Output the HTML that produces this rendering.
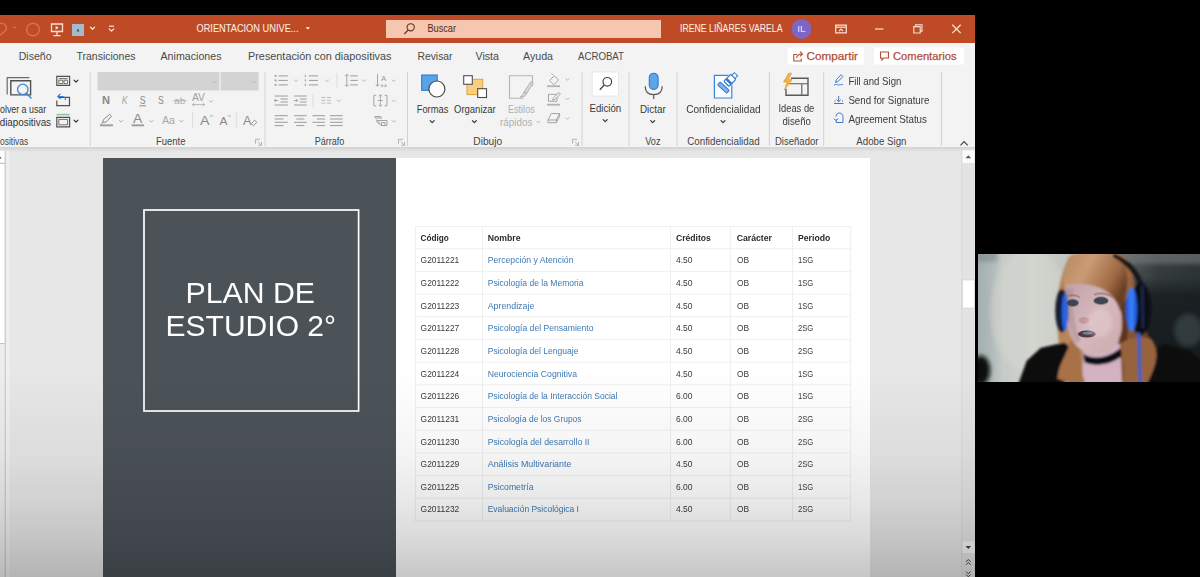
<!DOCTYPE html>
<html lang="es"><head><meta charset="utf-8"><title>ORIENTACION UNIVE... - PowerPoint</title>
<style>
html,body{margin:0;padding:0;background:#000;}
body{width:1200px;height:577px;overflow:hidden;position:relative;font-family:"Liberation Sans", sans-serif;}
#app{position:absolute;left:0;top:0;width:1200px;height:577px;filter:blur(0.45px);}
svg text{font-family:"Liberation Sans", sans-serif;}
</style></head><body>
<div id="app">
<svg width="1200" height="577" viewBox="0 0 1200 577" style="overflow:visible;display:block">
<defs>
<linearGradient id="btm" x1="0" y1="0" x2="0" y2="1"><stop offset="0" stop-color="#000" stop-opacity="0"/><stop offset="0.39" stop-color="#000" stop-opacity="0.04"/><stop offset="0.63" stop-color="#000" stop-opacity="0.09"/><stop offset="0.82" stop-color="#000" stop-opacity="0.15"/><stop offset="1" stop-color="#000" stop-opacity="0.22"/></linearGradient>
<linearGradient id="rshadow" x1="0" y1="0" x2="0" y2="1"><stop offset="0" stop-color="#d2d2d2"/><stop offset="1" stop-color="#e7e7e7"/></linearGradient>
<filter id="b1"><feGaussianBlur stdDeviation="1"/></filter>
<filter id="b2"><feGaussianBlur stdDeviation="2.2"/></filter>
<filter id="b4"><feGaussianBlur stdDeviation="4"/></filter>
<filter id="b8"><feGaussianBlur stdDeviation="8"/></filter>
<clipPath id="camclip"><rect x="978" y="254" width="240" height="128"/></clipPath>
</defs>
<g id="backgrounds">
<rect x="-10" y="-10" width="1220" height="600" fill="#000" />
<rect x="-10" y="15" width="985" height="28" fill="#BE4B26" />
<rect x="-10" y="43" width="985" height="107" fill="#F3F3F3" />
<rect x="-10" y="150" width="985" height="440" fill="#E7E7E7" />
<rect x="-10" y="147" width="985" height="5" fill="url(#rshadow)" />
</g>
<g id="titlebar">
<path d="M0 23.5 C5 22.5 8.5 27 5 31 L0 35.5" stroke="#D4754F" fill="none" stroke-width="1.4" />
<line x1="13" y1="27.5" x2="16.5" y2="27.5" stroke="#D4754F" stroke-width="1.2" />
<circle cx="33" cy="29.5" r="6.3" fill="none" stroke="#D27450" stroke-width="1.4"/>
<path d="M51.5 24h11v7.5h-11z M57 31.5v4 M53.5 35.7h7" stroke="#F8E3D3" fill="none" stroke-width="1.3" />
<path d="M55.6 25.8l3.2 2-3.2 2z" stroke="none" fill="#F8E3D3" stroke-width="1" />
<rect x="72" y="24" width="12" height="12" fill="#A3BBCB" />
<path d="M76.5 31.5l1.5-3 1.5 3z" stroke="none" fill="#3d5566" stroke-width="1" />
<path d="M90.5 27.3L92.5 29.3L94.5 27.3" stroke="#F8E3D3" fill="none" stroke-width="1.3" stroke-linecap="round" stroke-linejoin="round"/>
<line x1="109" y1="26.2" x2="114" y2="26.2" stroke="#F8E3D3" stroke-width="1.2" />
<path d="M109.2 28.85L111.5 31.15L113.8 28.85" stroke="#F8E3D3" fill="none" stroke-width="1.3" stroke-linecap="round" stroke-linejoin="round"/>
<text x="196.5" y="32.2" font-size="11.2" fill="#FFF4EA" font-weight="normal" font-style="normal" textLength="102.0" lengthAdjust="spacingAndGlyphs">ORIENTACION UNIVE...</text>
<path d="M305.6 27.2h4.4l-2.2 2.4z" stroke="none" fill="#FFF4EA" stroke-width="1" />
<rect x="386" y="20" width="275" height="18" fill="#F6C7AE" />
<circle cx="410.7" cy="27.3" r="3.6" fill="none" stroke="#5a3a2c" stroke-width="1.1"/>
<line x1="408.2" y1="30" x2="404.3" y2="34" stroke="#5a3a2c" stroke-width="1.2" />
<text x="427.5" y="32.3" font-size="10.5" fill="#4a2a1c" font-weight="normal" font-style="normal" textLength="28.5" lengthAdjust="spacingAndGlyphs">Buscar</text>
<text x="680.0" y="32.3" font-size="10.5" fill="#FFF4EA" font-weight="normal" font-style="normal" textLength="102.5" lengthAdjust="spacingAndGlyphs">IRENE LIÑARES VARELA</text>
<circle cx="801.5" cy="29" r="10" fill="#7F66C6"/>
<text x="797.3" y="32.3" font-size="8.8" fill="#E9E1FA" font-weight="normal" font-style="normal" textLength="8.4" lengthAdjust="spacingAndGlyphs">IL</text>
<path d="M835.7 25.2h10.6v7.6h-10.6z" stroke="#F8E3D3" fill="none" stroke-width="1.2" />
<line x1="835.7" y1="27.2" x2="846.3" y2="27.2" stroke="#F8E3D3" stroke-width="1.2" />
<path d="M839 31l2-2 2 2" stroke="#F8E3D3" fill="none" stroke-width="1.1" />
<line x1="875" y1="29" x2="883.5" y2="29" stroke="#F8E3D3" stroke-width="1.2" />
<path d="M913.8 26.6h6.4v6.4h-6.4z M915.6 26.4v-1.7h6.4v6.4h-1.6" stroke="#F8E3D3" fill="none" stroke-width="1.1" />
<path d="M952.3 24.7l8.4 8.4M960.7 24.7l-8.4 8.4" stroke="#F8E3D3" fill="none" stroke-width="1.3" />
</g>
<g id="tabs">
<text x="18.7" y="59.8" font-size="10.8" fill="#4a4a4a" font-weight="normal" font-style="normal" textLength="32.8" lengthAdjust="spacingAndGlyphs">Diseño</text>
<text x="76.5" y="59.8" font-size="10.8" fill="#4a4a4a" font-weight="normal" font-style="normal" textLength="59.0" lengthAdjust="spacingAndGlyphs">Transiciones</text>
<text x="160.5" y="59.8" font-size="10.8" fill="#4a4a4a" font-weight="normal" font-style="normal" textLength="61.0" lengthAdjust="spacingAndGlyphs">Animaciones</text>
<text x="248.0" y="59.8" font-size="10.8" fill="#4a4a4a" font-weight="normal" font-style="normal" textLength="143.5" lengthAdjust="spacingAndGlyphs">Presentación con diapositivas</text>
<text x="417.5" y="59.8" font-size="10.8" fill="#4a4a4a" font-weight="normal" font-style="normal" textLength="35.0" lengthAdjust="spacingAndGlyphs">Revisar</text>
<text x="475.5" y="59.8" font-size="10.8" fill="#4a4a4a" font-weight="normal" font-style="normal" textLength="23.5" lengthAdjust="spacingAndGlyphs">Vista</text>
<text x="523.0" y="59.8" font-size="10.8" fill="#4a4a4a" font-weight="normal" font-style="normal" textLength="30.0" lengthAdjust="spacingAndGlyphs">Ayuda</text>
<text x="578.0" y="59.8" font-size="10.8" fill="#4a4a4a" font-weight="normal" font-style="normal" textLength="46.0" lengthAdjust="spacingAndGlyphs">ACROBAT</text>
<rect x="787.5" y="47.5" width="76.5" height="17" fill="#FFFFFF" />
<rect x="874" y="47.5" width="90" height="17" fill="#FFFFFF" />
<text x="806.5" y="59.8" font-size="11" fill="#B24D38" font-weight="normal" font-style="normal" textLength="51.5" lengthAdjust="spacingAndGlyphs" stroke="#B24D38" stroke-width="0.25">Compartir</text>
<text x="893.0" y="59.8" font-size="11" fill="#B24D38" font-weight="normal" font-style="normal" textLength="63.5" lengthAdjust="spacingAndGlyphs" stroke="#B24D38" stroke-width="0.25">Comentarios</text>
<path d="M797 54.5h-3.2v6.5h7.5v-2.5" stroke="#B24D38" fill="none" stroke-width="1.1" />
<path d="M796.5 58c0.5-2.8 2.5-4 5.5-4 M800 51.7l2.5 2.3-2.5 2.3" stroke="#B24D38" fill="none" stroke-width="1.1" />
<path d="M880.5 52h8v6h-4.6l-2 2.2v-2.2h-1.4z" stroke="#B24D38" fill="none" stroke-width="1.1" />
</g>
<g id="ribbon-groups">
<line x1="90.2" y1="72" x2="90.2" y2="146" stroke="#D2D2D2" stroke-width="1" />
<line x1="265" y1="72" x2="265" y2="146" stroke="#D2D2D2" stroke-width="1" />
<line x1="407.5" y1="72" x2="407.5" y2="146" stroke="#D2D2D2" stroke-width="1" />
<line x1="582" y1="72" x2="582" y2="146" stroke="#D2D2D2" stroke-width="1" />
<line x1="629" y1="72" x2="629" y2="146" stroke="#D2D2D2" stroke-width="1" />
<line x1="677" y1="72" x2="677" y2="146" stroke="#D2D2D2" stroke-width="1" />
<line x1="769.4" y1="72" x2="769.4" y2="146" stroke="#D2D2D2" stroke-width="1" />
<line x1="823.7" y1="72" x2="823.7" y2="146" stroke="#D2D2D2" stroke-width="1" />
<line x1="941.4" y1="72" x2="941.4" y2="146" stroke="#D2D2D2" stroke-width="1" />
<text x="0.0" y="144.6" font-size="10" fill="#444" font-weight="normal" font-style="normal" textLength="28.2" lengthAdjust="spacingAndGlyphs">ositivas</text>
<text x="156.0" y="144.6" font-size="10" fill="#444" font-weight="normal" font-style="normal" textLength="29.5" lengthAdjust="spacingAndGlyphs">Fuente</text>
<text x="314.7" y="144.6" font-size="10" fill="#444" font-weight="normal" font-style="normal" textLength="29.7" lengthAdjust="spacingAndGlyphs">Párrafo</text>
<text x="473.3" y="144.6" font-size="10" fill="#444" font-weight="normal" font-style="normal" textLength="28.9" lengthAdjust="spacingAndGlyphs">Dibujo</text>
<text x="645.2" y="144.6" font-size="10" fill="#444" font-weight="normal" font-style="normal" textLength="15.3" lengthAdjust="spacingAndGlyphs">Voz</text>
<text x="687.2" y="144.6" font-size="10" fill="#444" font-weight="normal" font-style="normal" textLength="72.4" lengthAdjust="spacingAndGlyphs">Confidencialidad</text>
<text x="775.0" y="144.6" font-size="10" fill="#444" font-weight="normal" font-style="normal" textLength="43.4" lengthAdjust="spacingAndGlyphs">Diseñador</text>
<text x="856.3" y="144.6" font-size="10" fill="#444" font-weight="normal" font-style="normal" textLength="50.2" lengthAdjust="spacingAndGlyphs">Adobe Sign</text>
<path d="M255.5 143.8v-4.5h4.5 M257.7 141.5l3.6 3.6 M261.5 141.9v3.4h-3.4" stroke="#adadad" fill="none" stroke-width="0.9" />
<path d="M398.5 143.8v-4.5h4.5 M400.7 141.5l3.6 3.6 M404.5 141.9v3.4h-3.4" stroke="#adadad" fill="none" stroke-width="0.9" />
<path d="M572.5 143.8v-4.5h4.5 M574.7 141.5l3.6 3.6 M578.5 141.9v3.4h-3.4" stroke="#adadad" fill="none" stroke-width="0.9" />
<path d="M960.5 145.3l3.6-3.6 3.6 3.6" stroke="#444" fill="none" stroke-width="1.2" />
</g>
<g id="ribbon-diapositivas">
<path d="M7.2 94.6V77.7H29.3" stroke="#6a6a6a" fill="none" stroke-width="1.2" />
<path d="M10.8 80.7h19.8v14.2h-19.8z" stroke="#505050" fill="none" stroke-width="1.4" />
<circle cx="22.8" cy="89.4" r="5.2" fill="#F3F3F3" stroke="#3C86D6" stroke-width="1.3"/>
<line x1="26.5" y1="93.3" x2="31.4" y2="98.6" stroke="#3C86D6" stroke-width="1.4" />
<text x="0.0" y="113.0" font-size="10.6" fill="#333" font-weight="normal" font-style="normal" textLength="46.2" lengthAdjust="spacingAndGlyphs">olver a usar</text>
<text x="-0.3" y="125.6" font-size="10.6" fill="#333" font-weight="normal" font-style="normal" textLength="51.3" lengthAdjust="spacingAndGlyphs">diapositivas</text>
<path d="M56.8 76.3h12.8v9h-12.8z" stroke="#505050" fill="none" stroke-width="1.2" />
<path d="M58.8 78.6h8.8 M58.8 80.2h4v3.4h-4z M64 80.2h3.6v3.4h-3.6z" stroke="#505050" fill="none" stroke-width="0.8" />
<path d="M74 80.2L76 82.2L78 80.2" stroke="#333" fill="none" stroke-width="1.2" stroke-linecap="round" stroke-linejoin="round"/>
<path d="M58 97.3h11.5v8.3h-12.7v-5" stroke="#505050" fill="none" stroke-width="1.2" />
<path d="M60.5 93.8l-2.7 2.7 2.7 2.7 M57.8 96.5h4c2.5 0 3.8 1.5 3.8 3.5" stroke="#2F7FD0" fill="none" stroke-width="1.2" />
<rect x="56.5" y="113.8" width="13.2" height="1.6" fill="#8FC7A6" />
<path d="M56.8 117.3h12.8v9.5h-12.8z" stroke="#505050" fill="none" stroke-width="1.2" />
<path d="M58.8 119.4h8.8v5.4h-8.8z" stroke="#505050" fill="none" stroke-width="0.8" />
<path d="M74 120.2L76 122.2L78 120.2" stroke="#333" fill="none" stroke-width="1.2" stroke-linecap="round" stroke-linejoin="round"/>
</g>
<g id="ribbon-fuente">
<rect x="97.5" y="72" width="122" height="18.5" fill="#D3D3D3" />
<rect x="220.7" y="72" width="38" height="18.5" fill="#D3D3D3" />
<path d="M212.79999999999998 81.1L214.6 82.9L216.4 81.1" stroke="#b9b9b9" fill="none" stroke-width="1" stroke-linecap="round" stroke-linejoin="round"/>
<path d="M252.0 81.1L253.8 82.9L255.60000000000002 81.1" stroke="#b9b9b9" fill="none" stroke-width="1" stroke-linecap="round" stroke-linejoin="round"/>
<text x="102.0" y="103.9" font-size="11.5" fill="#888" font-weight="bold" font-style="normal" textLength="8.0" lengthAdjust="spacingAndGlyphs">N</text>
<text x="121.7" y="103.9" font-size="11.5" fill="#a8a8a8" font-weight="normal" font-style="italic" textLength="5.9" lengthAdjust="spacingAndGlyphs">K</text>
<text x="139.7" y="103.7" font-size="11.5" fill="#8a8a8a" font-weight="normal" font-style="normal" textLength="5.8" lengthAdjust="spacingAndGlyphs">S</text>
<line x1="139.3" y1="105.8" x2="146" y2="105.8" stroke="#8a8a8a" stroke-width="1" />
<text x="158.0" y="103.9" font-size="11.5" fill="#8a8a8a" font-weight="normal" font-style="normal" textLength="5.8" lengthAdjust="spacingAndGlyphs">S</text>
<text x="174.3" y="104.0" font-size="9" fill="#b0b0b0" font-weight="normal" font-style="normal" textLength="11.0" lengthAdjust="spacingAndGlyphs">ab</text>
<line x1="173" y1="100.7" x2="186.5" y2="100.7" stroke="#b0b0b0" stroke-width="0.9" />
<text x="192.0" y="101.0" font-size="10.3" fill="#a0a0a0" font-weight="normal" font-style="normal" textLength="13.0" lengthAdjust="spacingAndGlyphs">AV</text>
<path d="M192.5 104.6h12 M194.3 103.1l-1.8 1.5 1.8 1.5 M202.7 103.1l1.8 1.5-1.8 1.5" stroke="#a8a8a8" fill="none" stroke-width="0.8" />
<path d="M209.4 100.7L211 102.3L212.6 100.7" stroke="#b0b0b0" fill="none" stroke-width="1" stroke-linecap="round" stroke-linejoin="round"/>
<path d="M102.5 122.5l1.2-3.2 6-5 1.8 1.8-5.2 5.8z M102.3 122.7l-1 1.2" stroke="#8a8a8a" fill="none" stroke-width="1" />
<rect x="100" y="124.3" width="13" height="2" fill="#a0a0a0" />
<path d="M119.4 120.5L121 122.1L122.6 120.5" stroke="#b0b0b0" fill="none" stroke-width="1" stroke-linecap="round" stroke-linejoin="round"/>
<text x="133.0" y="122.6" font-size="12" fill="#8a8a8a" font-weight="normal" font-style="normal" textLength="9.3" lengthAdjust="spacingAndGlyphs">A</text>
<rect x="131.5" y="124.3" width="12.5" height="2" fill="#a0a0a0" />
<path d="M149.70000000000002 120.5L151.3 122.1L152.9 120.5" stroke="#b0b0b0" fill="none" stroke-width="1" stroke-linecap="round" stroke-linejoin="round"/>
<text x="162.0" y="124.3" font-size="10.5" fill="#a8a8a8" font-weight="normal" font-style="normal" textLength="13.0" lengthAdjust="spacingAndGlyphs">Aa</text>
<path d="M179.6 120.5L181.2 122.1L182.79999999999998 120.5" stroke="#b0b0b0" fill="none" stroke-width="1" stroke-linecap="round" stroke-linejoin="round"/>
<line x1="192.5" y1="112" x2="192.5" y2="128" stroke="#dcdcdc" stroke-width="1" />
<text x="200.0" y="125.0" font-size="13" fill="#8a8a8a" font-weight="normal" font-style="normal" textLength="9.5" lengthAdjust="spacingAndGlyphs">A</text>
<path d="M210.2 116.6l1.4-1.5 1.4 1.5" stroke="#8a8a8a" fill="none" stroke-width="0.8" />
<text x="219.5" y="125.0" font-size="11" fill="#8a8a8a" font-weight="normal" font-style="normal" textLength="8.0" lengthAdjust="spacingAndGlyphs">A</text>
<path d="M228 115.3l1.3 1.4 1.3-1.4" stroke="#8a8a8a" fill="none" stroke-width="0.8" />
<line x1="236.3" y1="112" x2="236.3" y2="128" stroke="#dcdcdc" stroke-width="1" />
<text x="243.0" y="125.0" font-size="12.5" fill="#8a8a8a" font-weight="normal" font-style="normal" textLength="8.5" lengthAdjust="spacingAndGlyphs">A</text>
<path d="M251.3 123.8l3.3-3.6 2.2 2-3.3 3.6z" stroke="#8a8a8a" fill="none" stroke-width="0.9" />
</g>
<g id="ribbon-parrafo">
<g transform="translate(0,-0.9)">
<rect x="274.7" y="75.89999999999999" width="1.8" height="1.8" fill="#9c9c9c" />
<line x1="278.5" y1="76.8" x2="287.8" y2="76.8" stroke="#9c9c9c" stroke-width="1" />
<rect x="274.7" y="80.39999999999999" width="1.8" height="1.8" fill="#9c9c9c" />
<line x1="278.5" y1="81.3" x2="287.8" y2="81.3" stroke="#9c9c9c" stroke-width="1" />
<rect x="274.7" y="84.89999999999999" width="1.8" height="1.8" fill="#9c9c9c" />
<line x1="278.5" y1="85.8" x2="287.8" y2="85.8" stroke="#9c9c9c" stroke-width="1" />
<path d="M294.4 80.8L296 82.39999999999999L297.6 80.8" stroke="#b8b8b8" fill="none" stroke-width="1" stroke-linecap="round" stroke-linejoin="round"/>
<line x1="305.3" y1="75.6" x2="305.3" y2="78.0" stroke="#9c9c9c" stroke-width="1" />
<line x1="308.8" y1="76.8" x2="318" y2="76.8" stroke="#9c9c9c" stroke-width="1" />
<line x1="305.3" y1="80.1" x2="305.3" y2="82.5" stroke="#9c9c9c" stroke-width="1" />
<line x1="308.8" y1="81.3" x2="318" y2="81.3" stroke="#9c9c9c" stroke-width="1" />
<line x1="305.3" y1="84.6" x2="305.3" y2="87.0" stroke="#9c9c9c" stroke-width="1" />
<line x1="308.8" y1="85.8" x2="318" y2="85.8" stroke="#9c9c9c" stroke-width="1" />
<path d="M325.4 80.8L327 82.39999999999999L328.6 80.8" stroke="#b8b8b8" fill="none" stroke-width="1" stroke-linecap="round" stroke-linejoin="round"/>
<line x1="337" y1="74" x2="337" y2="88.5" stroke="#dcdcdc" stroke-width="1" />
<path d="M346.8 75.3v12 M345 77l1.8-1.8 1.8 1.8 M345 85.6l1.8 1.8 1.8-1.8" stroke="#9c9c9c" fill="none" stroke-width="0.9" />
<line x1="350.3" y1="76.8" x2="357.7" y2="76.8" stroke="#9c9c9c" stroke-width="1" />
<line x1="350.3" y1="81.3" x2="357.7" y2="81.3" stroke="#9c9c9c" stroke-width="1" />
<line x1="350.3" y1="85.8" x2="357.7" y2="85.8" stroke="#9c9c9c" stroke-width="1" />
<path d="M362.4 80.8L364 82.39999999999999L365.6 80.8" stroke="#b8b8b8" fill="none" stroke-width="1" stroke-linecap="round" stroke-linejoin="round"/>
<path d="M377.5 75v12 M375.7 85.3l1.8 1.8 1.8-1.8" stroke="#9c9c9c" fill="none" stroke-width="0.9" />
<text x="381.0" y="81.5" font-size="7.5" fill="#9c9c9c" font-weight="normal" font-style="normal" textLength="5.3" lengthAdjust="spacingAndGlyphs">A</text>
<path d="M381 86.7h5.4 M382.5 85.3l-1.6 1.4 1.6 1.4 M384.9 85.3l1.6 1.4-1.6 1.4" stroke="#9c9c9c" fill="none" stroke-width="0.7" />
<path d="M392.09999999999997 80.8L393.7 82.39999999999999L395.3 80.8" stroke="#b8b8b8" fill="none" stroke-width="1" stroke-linecap="round" stroke-linejoin="round"/>
</g>
<line x1="274.7" y1="96" x2="287.8" y2="96" stroke="#9c9c9c" stroke-width="1" />
<line x1="274.7" y1="105" x2="287.8" y2="105" stroke="#9c9c9c" stroke-width="1" />
<line x1="280.5" y1="99" x2="287.8" y2="99" stroke="#9c9c9c" stroke-width="1" />
<line x1="280.5" y1="102" x2="287.8" y2="102" stroke="#9c9c9c" stroke-width="1" />
<path d="M278.2 100.5h-3.8 M276 98.8l-1.7 1.7 1.7 1.7" stroke="#9c9c9c" fill="none" stroke-width="0.9" />
<line x1="294" y1="96" x2="306.7" y2="96" stroke="#9c9c9c" stroke-width="1" />
<line x1="294" y1="105" x2="306.7" y2="105" stroke="#9c9c9c" stroke-width="1" />
<line x1="299.8" y1="99" x2="306.7" y2="99" stroke="#9c9c9c" stroke-width="1" />
<line x1="299.8" y1="102" x2="306.7" y2="102" stroke="#9c9c9c" stroke-width="1" />
<path d="M293.8 100.5h3.8 M296 98.8l1.7 1.7-1.7 1.7" stroke="#9c9c9c" fill="none" stroke-width="0.9" />
<line x1="313" y1="93.5" x2="313" y2="107.5" stroke="#dcdcdc" stroke-width="1" />
<line x1="321.5" y1="97.5" x2="325.5" y2="97.5" stroke="#bdbdbd" stroke-width="1" />
<line x1="321.5" y1="100.3" x2="325.5" y2="100.3" stroke="#bdbdbd" stroke-width="1" />
<line x1="321.5" y1="103.1" x2="325.5" y2="103.1" stroke="#bdbdbd" stroke-width="1" />
<line x1="327" y1="97.5" x2="331" y2="97.5" stroke="#bdbdbd" stroke-width="1" />
<line x1="327" y1="100.3" x2="331" y2="100.3" stroke="#bdbdbd" stroke-width="1" />
<line x1="327" y1="103.1" x2="331" y2="103.1" stroke="#bdbdbd" stroke-width="1" />
<path d="M337.09999999999997 100.2L338.7 101.8L340.3 100.2" stroke="#b8b8b8" fill="none" stroke-width="1" stroke-linecap="round" stroke-linejoin="round"/>
<path d="M376.2 95.3h-2.4v10.5h2.4 M384.6 95.3h2.4v10.5h-2.4" stroke="#9c9c9c" fill="none" stroke-width="0.9" />
<path d="M380.4 94.5v12 M378.8 96.3l1.6-1.6 1.6 1.6 M378.8 104.7l1.6 1.6 1.6-1.6 M377.8 100.5h5.2" stroke="#9c9c9c" fill="none" stroke-width="0.8" />
<path d="M392.09999999999997 100.2L393.7 101.8L395.3 100.2" stroke="#b8b8b8" fill="none" stroke-width="1" stroke-linecap="round" stroke-linejoin="round"/>
<line x1="274.7" y1="115.7" x2="287.8" y2="115.7" stroke="#9c9c9c" stroke-width="1" />
<line x1="294" y1="115.7" x2="306.7" y2="115.7" stroke="#9c9c9c" stroke-width="1" />
<line x1="312.4" y1="115.7" x2="325" y2="115.7" stroke="#9c9c9c" stroke-width="1" />
<line x1="330" y1="115.7" x2="342.7" y2="115.7" stroke="#9c9c9c" stroke-width="1" />
<line x1="274.7" y1="119" x2="283.5" y2="119" stroke="#9c9c9c" stroke-width="1" />
<line x1="296.3" y1="119" x2="304.4" y2="119" stroke="#9c9c9c" stroke-width="1" />
<line x1="316.8" y1="119" x2="325" y2="119" stroke="#9c9c9c" stroke-width="1" />
<line x1="330" y1="119" x2="342.7" y2="119" stroke="#9c9c9c" stroke-width="1" />
<line x1="274.7" y1="122.3" x2="287.8" y2="122.3" stroke="#9c9c9c" stroke-width="1" />
<line x1="294" y1="122.3" x2="306.7" y2="122.3" stroke="#9c9c9c" stroke-width="1" />
<line x1="312.4" y1="122.3" x2="325" y2="122.3" stroke="#9c9c9c" stroke-width="1" />
<line x1="330" y1="122.3" x2="342.7" y2="122.3" stroke="#9c9c9c" stroke-width="1" />
<line x1="274.7" y1="125.6" x2="283.5" y2="125.6" stroke="#9c9c9c" stroke-width="1" />
<line x1="296.3" y1="125.6" x2="304.4" y2="125.6" stroke="#9c9c9c" stroke-width="1" />
<line x1="316.8" y1="125.6" x2="325" y2="125.6" stroke="#9c9c9c" stroke-width="1" />
<line x1="330" y1="125.6" x2="342.7" y2="125.6" stroke="#9c9c9c" stroke-width="1" />
<path d="M375 116.5h5.5l1.5 1.5h-7z M377.5 120.5h9.5v5h-6z M381.5 122.5h3.5v3h-3.5z" stroke="#9c9c9c" fill="none" stroke-width="0.9" />
<path d="M376.5 119.5c0 2.5 1 4 3 4.5" stroke="#9c9c9c" fill="none" stroke-width="0.8" />
<path d="M392.09999999999997 120.5L393.7 122.1L395.3 120.5" stroke="#b8b8b8" fill="none" stroke-width="1" stroke-linecap="round" stroke-linejoin="round"/>
</g>
<g id="ribbon-dibujo">
<rect x="421.7" y="75" width="15.5" height="15.3" fill="#5AA2E8" stroke="#2F78CE" stroke-width="1.1"/>
<circle cx="436.9" cy="89" r="8" fill="#FDFDFD" stroke="#4a4a4a" stroke-width="1.2"/>
<text x="416.7" y="112.7" font-size="11" fill="#3a3a3a" font-weight="normal" font-style="normal" textLength="31.7" lengthAdjust="spacingAndGlyphs">Formas</text>
<path d="M430.2 120.6L432.2 122.6L434.2 120.6" stroke="#333" fill="none" stroke-width="1.2" stroke-linecap="round" stroke-linejoin="round"/>
<rect x="467" y="79.3" width="15.7" height="15.3" fill="#F8CF7E" stroke="#E2A336" stroke-width="1"/>
<rect x="463.7" y="75.7" width="8.6" height="8.6" fill="#FFFFFF" stroke="#5a4a5a" stroke-width="1.1"/>
<rect x="477.7" y="88.7" width="8.8" height="8.8" fill="#FFFFFF" stroke="#4a4a4a" stroke-width="1.1"/>
<text x="454.0" y="112.7" font-size="11" fill="#3a3a3a" font-weight="normal" font-style="normal" textLength="41.7" lengthAdjust="spacingAndGlyphs">Organizar</text>
<path d="M472.4 120.6L474.4 122.6L476.4 120.6" stroke="#333" fill="none" stroke-width="1.2" stroke-linecap="round" stroke-linejoin="round"/>
<path d="M532.5 86v-10.3h-23v22.5h14" stroke="#b4b4b4" fill="none" stroke-width="1.1" />
<path d="M531 81.5l2.2 1.4-6.5 10.5-2.5-1.6z M524 92l2.6 1.7c-1 2.3-3.5 3.6-6.6 3.3 2.5-1 3-2.8 4-5z" stroke="#ababab" fill="#d9d9d9" stroke-width="0.9" />
<text x="507.9" y="112.7" font-size="11" fill="#b0b0b0" font-weight="normal" font-style="normal" textLength="26.9" lengthAdjust="spacingAndGlyphs">Estilos</text>
<text x="500.0" y="126.0" font-size="11" fill="#b0b0b0" font-weight="normal" font-style="normal" textLength="32.5" lengthAdjust="spacingAndGlyphs">rápidos</text>
<path d="M536.6999999999999 121.2L538.3 122.8L539.9 121.2" stroke="#b8b8b8" fill="none" stroke-width="1" stroke-linecap="round" stroke-linejoin="round"/>
<path d="M549.5 80.5l4.8-4.8 4.3 4.3-4.8 4.8z M553 75l-1.5-1.5" stroke="#9c9c9c" fill="none" stroke-width="0.9" />
<rect x="547" y="85.3" width="13" height="1.8" fill="#b3b3b3" />
<path d="M565.8 78.7L567.4 80.3L569.0 78.7" stroke="#b8b8b8" fill="none" stroke-width="1" stroke-linecap="round" stroke-linejoin="round"/>
<path d="M548.5 94.3h8.5v7h-8.5z" stroke="#9c9c9c" fill="none" stroke-width="0.9" />
<path d="M552.5 100.3l1-2.6 5.3-5.3 1.6 1.6-5.3 5.3z" stroke="#9c9c9c" fill="#F3F3F3" stroke-width="0.9" />
<rect x="547" y="103.8" width="13" height="1.8" fill="#b3b3b3" />
<path d="M565.8 98.2L567.4 99.8L569.0 98.2" stroke="#b8b8b8" fill="none" stroke-width="1" stroke-linecap="round" stroke-linejoin="round"/>
<path d="M548 120l3.3-6.5h8.3l-3.3 6.5z M548 120v2.7h8.3l3.3-6.5v-2.7 M556.3 120v2.7" stroke="#9c9c9c" fill="none" stroke-width="0.9" />
<path d="M565.8 117.7L567.4 119.3L569.0 117.7" stroke="#b8b8b8" fill="none" stroke-width="1" stroke-linecap="round" stroke-linejoin="round"/>
</g>
<g id="ribbon-edicion">
<rect x="592.2" y="72" width="26.3" height="24" fill="#FFFFFF" stroke="#E3E3E3" stroke-width="0.8"/>
<circle cx="607.3" cy="81.8" r="4.3" fill="none" stroke="#444" stroke-width="1.2"/>
<line x1="604.3" y1="85" x2="599.8" y2="89.8" stroke="#444" stroke-width="1.3" />
<text x="589.5" y="111.5" font-size="11" fill="#3a3a3a" font-weight="normal" font-style="normal" textLength="31.7" lengthAdjust="spacingAndGlyphs">Edición</text>
<path d="M603.2 119.6L605.2 121.6L607.2 119.6" stroke="#333" fill="none" stroke-width="1.2" stroke-linecap="round" stroke-linejoin="round"/>
</g>
<g id="ribbon-voz">
<rect x="649.3" y="73.2" width="8.8" height="16.3" rx="4.4" fill="#5CA6E6" stroke="#2F78CE" stroke-width="1.1"/>
<path d="M645.2 86.3c0 5.6 3.5 8.4 8.5 8.4s8.5-2.8 8.5-8.4 M653.7 94.8v4.3" stroke="#555" fill="none" stroke-width="1.2" />
<text x="640.0" y="113.0" font-size="11" fill="#3a3a3a" font-weight="normal" font-style="normal" textLength="25.7" lengthAdjust="spacingAndGlyphs">Dictar</text>
<path d="M650.7 120.6L652.7 122.6L654.7 120.6" stroke="#333" fill="none" stroke-width="1.2" stroke-linecap="round" stroke-linejoin="round"/>
</g>
<g id="ribbon-confidencialidad">
<path d="M714.4 75.4h17.4v22.6h-17.4z" stroke="#3C86D6" fill="#FAFCFF" stroke-width="1.2" />
<rect x="-6.3" y="-2" width="12.6" height="4" rx="1.2" transform="translate(723.4 87.6) rotate(42)" fill="#7DB5EC" stroke="#2F78CE" stroke-width="1"/>
<g transform="translate(730.6 79.6) rotate(-45)"><rect x="-7" y="-4.6" width="15.5" height="9.2" rx="1.5" fill="#F3F3F3"/><rect x="-6" y="-3.6" width="10" height="7.2" rx="1.2" fill="#FFFFFF" stroke="#2F78CE" stroke-width="1.2"/><rect x="-3.8" y="-3.6" width="2.6" height="7.2" fill="#2F78CE"/><rect x="4" y="-2.3" width="3.6" height="4.6" fill="#FFFFFF" stroke="#2F78CE" stroke-width="1"/></g>
<text x="686.2" y="113.0" font-size="11" fill="#3a3a3a" font-weight="normal" font-style="normal" textLength="74.4" lengthAdjust="spacingAndGlyphs">Confidencialidad</text>
<path d="M721 120.6L723 122.6L725 120.6" stroke="#333" fill="none" stroke-width="1.2" stroke-linecap="round" stroke-linejoin="round"/>
</g>
<g id="ribbon-disenador">
<path d="M791 78.2h17v17h-22v-6.5" stroke="#5a5a5a" fill="none" stroke-width="1.4" />
<path d="M789 83.8h19 M801.8 83.8v11" stroke="#5a5a5a" fill="none" stroke-width="1.1" />
<path d="M788.7 73.2l-5.2 8.8h3.6l-2.6 7.8 7.6-10.2h-3.8l3.2-6.4z" stroke="#E09A28" fill="#F6B33C" stroke-width="0.7" />
<text x="778.4" y="112.4" font-size="11" fill="#3a3a3a" font-weight="normal" font-style="normal" textLength="35.9" lengthAdjust="spacingAndGlyphs">Ideas de</text>
<text x="782.5" y="125.2" font-size="11" fill="#3a3a3a" font-weight="normal" font-style="normal" textLength="28.4" lengthAdjust="spacingAndGlyphs">diseño</text>
</g>
<g id="ribbon-adobe-sign">
<text x="848.4" y="84.8" font-size="10.8" fill="#3a3a3a" font-weight="normal" font-style="normal" textLength="53.0" lengthAdjust="spacingAndGlyphs">Fill and Sign</text>
<text x="848.4" y="103.9" font-size="10.8" fill="#3a3a3a" font-weight="normal" font-style="normal" textLength="81.0" lengthAdjust="spacingAndGlyphs">Send for Signature</text>
<text x="848.4" y="122.8" font-size="10.8" fill="#3a3a3a" font-weight="normal" font-style="normal" textLength="78.6" lengthAdjust="spacingAndGlyphs">Agreement Status</text>
<path d="M835.5 82.5l1-3 4.6-4.8 1.8 1.8-4.6 4.8z M834 85.2c2-1.5 3-.5 4.5-.3s2.5-.8 4.5-.2" stroke="#3F78C8" fill="none" stroke-width="1" />
<path d="M834 103.5h9.5 M838.7 96v5.5 M836.5 99.5l2.2 2.2 2.2-2.2 M835 100.5v1.3 M842.5 100.5v1.3" stroke="#3F78C8" fill="none" stroke-width="1" />
<path d="M836 116.5c0-2.2 1.7-3.5 3.4-3.5 2 0 3.6 1.6 3.6 4.2v5.3h-6.8v-3" stroke="#3F78C8" fill="none" stroke-width="1" />
<path d="M833.7 118.7l2.3 1.8 2.3-1.8" stroke="#3F78C8" fill="none" stroke-width="1" />
</g>
<g id="thumb-panel">
<rect x="-10" y="150.8" width="14.8" height="440" fill="#FFFFFF" />
<line x1="-10" y1="163.3" x2="4.8" y2="163.3" stroke="#b5b5b5" stroke-width="1" />
<path d="M-1 158.6l1.2-1.8 1.5 1.8z" stroke="none" fill="#444" stroke-width="1" />
<rect x="-10" y="343.5" width="14.8" height="260" fill="#EDEDED" />
<line x1="-10" y1="343.5" x2="4.8" y2="343.5" stroke="#c4c4c4" stroke-width="1" />
<rect x="5.6" y="150.8" width="4" height="440" fill="#EFEFEF" />
<line x1="5.2" y1="150.8" x2="5.2" y2="590" stroke="#bdbdbd" stroke-width="0.9" />
</g>
<g id="slide">
<rect x="103" y="158" width="767" height="435" fill="#FFFFFF" />
<rect x="103" y="158" width="293" height="435" fill="#4B5258" />
<rect x="144" y="210" width="214.6" height="201" fill="none" stroke="#FFFFFF" stroke-width="1.7"/>
<text x="185.6" y="303.3" font-size="29" fill="#FFFFFF" font-weight="normal" font-style="normal" textLength="129.4" lengthAdjust="spacingAndGlyphs">PLAN DE</text>
<text x="165.6" y="336.3" font-size="29" fill="#FFFFFF" font-weight="normal" font-style="normal" textLength="170.4" lengthAdjust="spacingAndGlyphs">ESTUDIO 2°</text>
</g>
<g id="plan-table">
<rect x="415.6" y="226.5" width="435.1" height="294.5" fill="#FFFFFF" stroke="#EFEFEF" stroke-width="1"/>
<line x1="415.6" y1="248.7" x2="850.7" y2="248.7" stroke="#EFEFEF" stroke-width="1" />
<line x1="415.6" y1="271.39" x2="850.7" y2="271.39" stroke="#EFEFEF" stroke-width="1" />
<line x1="415.6" y1="294.08" x2="850.7" y2="294.08" stroke="#EFEFEF" stroke-width="1" />
<line x1="415.6" y1="316.77" x2="850.7" y2="316.77" stroke="#EFEFEF" stroke-width="1" />
<line x1="415.6" y1="339.46" x2="850.7" y2="339.46" stroke="#EFEFEF" stroke-width="1" />
<line x1="415.6" y1="362.15" x2="850.7" y2="362.15" stroke="#EFEFEF" stroke-width="1" />
<line x1="415.6" y1="384.84000000000003" x2="850.7" y2="384.84000000000003" stroke="#EFEFEF" stroke-width="1" />
<line x1="415.6" y1="407.53" x2="850.7" y2="407.53" stroke="#EFEFEF" stroke-width="1" />
<line x1="415.6" y1="430.22" x2="850.7" y2="430.22" stroke="#EFEFEF" stroke-width="1" />
<line x1="415.6" y1="452.90999999999997" x2="850.7" y2="452.90999999999997" stroke="#EFEFEF" stroke-width="1" />
<line x1="415.6" y1="475.6" x2="850.7" y2="475.6" stroke="#EFEFEF" stroke-width="1" />
<line x1="415.6" y1="498.28999999999996" x2="850.7" y2="498.28999999999996" stroke="#EFEFEF" stroke-width="1" />
<line x1="482.5" y1="226.5" x2="482.5" y2="520.98" stroke="#EFEFEF" stroke-width="1" />
<line x1="670.6" y1="226.5" x2="670.6" y2="520.98" stroke="#EFEFEF" stroke-width="1" />
<line x1="730.3" y1="226.5" x2="730.3" y2="520.98" stroke="#EFEFEF" stroke-width="1" />
<line x1="792.5" y1="226.5" x2="792.5" y2="520.98" stroke="#EFEFEF" stroke-width="1" />
<text x="420.6" y="240.7" font-size="8.6" fill="#2b2b2b" font-weight="bold" font-style="normal" textLength="28.3" lengthAdjust="spacingAndGlyphs">Código</text>
<text x="487.7" y="240.7" font-size="8.6" fill="#2b2b2b" font-weight="bold" font-style="normal" textLength="32.8" lengthAdjust="spacingAndGlyphs">Nombre</text>
<text x="676.0" y="240.7" font-size="8.6" fill="#2b2b2b" font-weight="bold" font-style="normal" textLength="34.8" lengthAdjust="spacingAndGlyphs">Créditos</text>
<text x="736.7" y="240.7" font-size="8.6" fill="#2b2b2b" font-weight="bold" font-style="normal" textLength="35.3" lengthAdjust="spacingAndGlyphs">Carácter</text>
<text x="798.0" y="240.7" font-size="8.6" fill="#2b2b2b" font-weight="bold" font-style="normal" textLength="32.3" lengthAdjust="spacingAndGlyphs">Periodo</text>
<text x="420.6" y="263.4" font-size="8.6" fill="#3a3a3a" font-weight="normal" font-style="normal" textLength="38.7" lengthAdjust="spacingAndGlyphs">G2011221</text>
<text x="487.7" y="263.4" font-size="8.6" fill="#3E79B4" font-weight="normal" font-style="normal" textLength="85.8" lengthAdjust="spacingAndGlyphs">Percepción y Atención</text>
<text x="676.0" y="263.4" font-size="8.6" fill="#3a3a3a" font-weight="normal" font-style="normal" textLength="16.5" lengthAdjust="spacingAndGlyphs">4.50</text>
<text x="736.9" y="263.4" font-size="8.6" fill="#3a3a3a" font-weight="normal" font-style="normal" textLength="12.1" lengthAdjust="spacingAndGlyphs">OB</text>
<text x="798.0" y="263.4" font-size="8.6" fill="#3a3a3a" font-weight="normal" font-style="normal" textLength="15.3" lengthAdjust="spacingAndGlyphs">1SG</text>
<text x="420.6" y="286.0" font-size="8.6" fill="#3a3a3a" font-weight="normal" font-style="normal" textLength="38.7" lengthAdjust="spacingAndGlyphs">G2011222</text>
<text x="487.7" y="286.0" font-size="8.6" fill="#3E79B4" font-weight="normal" font-style="normal" textLength="95.8" lengthAdjust="spacingAndGlyphs">Psicología de la Memoria</text>
<text x="676.0" y="286.0" font-size="8.6" fill="#3a3a3a" font-weight="normal" font-style="normal" textLength="16.5" lengthAdjust="spacingAndGlyphs">4.50</text>
<text x="736.9" y="286.0" font-size="8.6" fill="#3a3a3a" font-weight="normal" font-style="normal" textLength="12.1" lengthAdjust="spacingAndGlyphs">OB</text>
<text x="798.0" y="286.0" font-size="8.6" fill="#3a3a3a" font-weight="normal" font-style="normal" textLength="15.3" lengthAdjust="spacingAndGlyphs">1SG</text>
<text x="420.6" y="308.7" font-size="8.6" fill="#3a3a3a" font-weight="normal" font-style="normal" textLength="38.7" lengthAdjust="spacingAndGlyphs">G2011223</text>
<text x="487.7" y="308.7" font-size="8.6" fill="#3E79B4" font-weight="normal" font-style="normal" textLength="46.6" lengthAdjust="spacingAndGlyphs">Aprendizaje</text>
<text x="676.0" y="308.7" font-size="8.6" fill="#3a3a3a" font-weight="normal" font-style="normal" textLength="16.5" lengthAdjust="spacingAndGlyphs">4.50</text>
<text x="736.9" y="308.7" font-size="8.6" fill="#3a3a3a" font-weight="normal" font-style="normal" textLength="12.1" lengthAdjust="spacingAndGlyphs">OB</text>
<text x="798.0" y="308.7" font-size="8.6" fill="#3a3a3a" font-weight="normal" font-style="normal" textLength="15.3" lengthAdjust="spacingAndGlyphs">1SG</text>
<text x="420.6" y="331.3" font-size="8.6" fill="#3a3a3a" font-weight="normal" font-style="normal" textLength="38.7" lengthAdjust="spacingAndGlyphs">G2011227</text>
<text x="487.7" y="331.3" font-size="8.6" fill="#3E79B4" font-weight="normal" font-style="normal" textLength="105.8" lengthAdjust="spacingAndGlyphs">Psicología del Pensamiento</text>
<text x="676.0" y="331.3" font-size="8.6" fill="#3a3a3a" font-weight="normal" font-style="normal" textLength="16.5" lengthAdjust="spacingAndGlyphs">4.50</text>
<text x="736.9" y="331.3" font-size="8.6" fill="#3a3a3a" font-weight="normal" font-style="normal" textLength="12.1" lengthAdjust="spacingAndGlyphs">OB</text>
<text x="798.0" y="331.3" font-size="8.6" fill="#3a3a3a" font-weight="normal" font-style="normal" textLength="15.3" lengthAdjust="spacingAndGlyphs">2SG</text>
<text x="420.6" y="354.0" font-size="8.6" fill="#3a3a3a" font-weight="normal" font-style="normal" textLength="38.7" lengthAdjust="spacingAndGlyphs">G2011228</text>
<text x="487.7" y="354.0" font-size="8.6" fill="#3E79B4" font-weight="normal" font-style="normal" textLength="90.8" lengthAdjust="spacingAndGlyphs">Psicología del Lenguaje</text>
<text x="676.0" y="354.0" font-size="8.6" fill="#3a3a3a" font-weight="normal" font-style="normal" textLength="16.5" lengthAdjust="spacingAndGlyphs">4.50</text>
<text x="736.9" y="354.0" font-size="8.6" fill="#3a3a3a" font-weight="normal" font-style="normal" textLength="12.1" lengthAdjust="spacingAndGlyphs">OB</text>
<text x="798.0" y="354.0" font-size="8.6" fill="#3a3a3a" font-weight="normal" font-style="normal" textLength="15.3" lengthAdjust="spacingAndGlyphs">2SG</text>
<text x="420.6" y="376.6" font-size="8.6" fill="#3a3a3a" font-weight="normal" font-style="normal" textLength="38.7" lengthAdjust="spacingAndGlyphs">G2011224</text>
<text x="487.7" y="376.6" font-size="8.6" fill="#3E79B4" font-weight="normal" font-style="normal" textLength="89.3" lengthAdjust="spacingAndGlyphs">Neurociencia Cognitiva</text>
<text x="676.0" y="376.6" font-size="8.6" fill="#3a3a3a" font-weight="normal" font-style="normal" textLength="16.5" lengthAdjust="spacingAndGlyphs">4.50</text>
<text x="736.9" y="376.6" font-size="8.6" fill="#3a3a3a" font-weight="normal" font-style="normal" textLength="12.1" lengthAdjust="spacingAndGlyphs">OB</text>
<text x="798.0" y="376.6" font-size="8.6" fill="#3a3a3a" font-weight="normal" font-style="normal" textLength="15.3" lengthAdjust="spacingAndGlyphs">1SG</text>
<text x="420.6" y="399.2" font-size="8.6" fill="#3a3a3a" font-weight="normal" font-style="normal" textLength="38.7" lengthAdjust="spacingAndGlyphs">G2011226</text>
<text x="487.7" y="399.2" font-size="8.6" fill="#3E79B4" font-weight="normal" font-style="normal" textLength="129.8" lengthAdjust="spacingAndGlyphs">Psicología de la Interacción Social</text>
<text x="676.0" y="399.2" font-size="8.6" fill="#3a3a3a" font-weight="normal" font-style="normal" textLength="16.5" lengthAdjust="spacingAndGlyphs">6.00</text>
<text x="736.9" y="399.2" font-size="8.6" fill="#3a3a3a" font-weight="normal" font-style="normal" textLength="12.1" lengthAdjust="spacingAndGlyphs">OB</text>
<text x="798.0" y="399.2" font-size="8.6" fill="#3a3a3a" font-weight="normal" font-style="normal" textLength="15.3" lengthAdjust="spacingAndGlyphs">1SG</text>
<text x="420.6" y="421.9" font-size="8.6" fill="#3a3a3a" font-weight="normal" font-style="normal" textLength="38.7" lengthAdjust="spacingAndGlyphs">G2011231</text>
<text x="487.7" y="421.9" font-size="8.6" fill="#3E79B4" font-weight="normal" font-style="normal" textLength="93.8" lengthAdjust="spacingAndGlyphs">Psicología de los Grupos</text>
<text x="676.0" y="421.9" font-size="8.6" fill="#3a3a3a" font-weight="normal" font-style="normal" textLength="16.5" lengthAdjust="spacingAndGlyphs">6.00</text>
<text x="736.9" y="421.9" font-size="8.6" fill="#3a3a3a" font-weight="normal" font-style="normal" textLength="12.1" lengthAdjust="spacingAndGlyphs">OB</text>
<text x="798.0" y="421.9" font-size="8.6" fill="#3a3a3a" font-weight="normal" font-style="normal" textLength="15.3" lengthAdjust="spacingAndGlyphs">2SG</text>
<text x="420.6" y="444.5" font-size="8.6" fill="#3a3a3a" font-weight="normal" font-style="normal" textLength="38.7" lengthAdjust="spacingAndGlyphs">G2011230</text>
<text x="487.7" y="444.5" font-size="8.6" fill="#3E79B4" font-weight="normal" font-style="normal" textLength="101.8" lengthAdjust="spacingAndGlyphs">Psicología del desarrollo II</text>
<text x="676.0" y="444.5" font-size="8.6" fill="#3a3a3a" font-weight="normal" font-style="normal" textLength="16.5" lengthAdjust="spacingAndGlyphs">6.00</text>
<text x="736.9" y="444.5" font-size="8.6" fill="#3a3a3a" font-weight="normal" font-style="normal" textLength="12.1" lengthAdjust="spacingAndGlyphs">OB</text>
<text x="798.0" y="444.5" font-size="8.6" fill="#3a3a3a" font-weight="normal" font-style="normal" textLength="15.3" lengthAdjust="spacingAndGlyphs">2SG</text>
<text x="420.6" y="467.2" font-size="8.6" fill="#3a3a3a" font-weight="normal" font-style="normal" textLength="38.7" lengthAdjust="spacingAndGlyphs">G2011229</text>
<text x="487.7" y="467.2" font-size="8.6" fill="#3E79B4" font-weight="normal" font-style="normal" textLength="83.8" lengthAdjust="spacingAndGlyphs">Análisis Multivariante</text>
<text x="676.0" y="467.2" font-size="8.6" fill="#3a3a3a" font-weight="normal" font-style="normal" textLength="16.5" lengthAdjust="spacingAndGlyphs">4.50</text>
<text x="736.9" y="467.2" font-size="8.6" fill="#3a3a3a" font-weight="normal" font-style="normal" textLength="12.1" lengthAdjust="spacingAndGlyphs">OB</text>
<text x="798.0" y="467.2" font-size="8.6" fill="#3a3a3a" font-weight="normal" font-style="normal" textLength="15.3" lengthAdjust="spacingAndGlyphs">2SG</text>
<text x="420.6" y="489.8" font-size="8.6" fill="#3a3a3a" font-weight="normal" font-style="normal" textLength="38.7" lengthAdjust="spacingAndGlyphs">G2011225</text>
<text x="487.7" y="489.8" font-size="8.6" fill="#3E79B4" font-weight="normal" font-style="normal" textLength="45.8" lengthAdjust="spacingAndGlyphs">Psicometría</text>
<text x="676.0" y="489.8" font-size="8.6" fill="#3a3a3a" font-weight="normal" font-style="normal" textLength="16.5" lengthAdjust="spacingAndGlyphs">6.00</text>
<text x="736.9" y="489.8" font-size="8.6" fill="#3a3a3a" font-weight="normal" font-style="normal" textLength="12.1" lengthAdjust="spacingAndGlyphs">OB</text>
<text x="798.0" y="489.8" font-size="8.6" fill="#3a3a3a" font-weight="normal" font-style="normal" textLength="15.3" lengthAdjust="spacingAndGlyphs">1SG</text>
<text x="420.6" y="512.4" font-size="8.6" fill="#3a3a3a" font-weight="normal" font-style="normal" textLength="38.7" lengthAdjust="spacingAndGlyphs">G2011232</text>
<text x="487.7" y="512.4" font-size="8.6" fill="#3E79B4" font-weight="normal" font-style="normal" textLength="91.3" lengthAdjust="spacingAndGlyphs">Evaluación Psicológica I</text>
<text x="676.0" y="512.4" font-size="8.6" fill="#3a3a3a" font-weight="normal" font-style="normal" textLength="16.5" lengthAdjust="spacingAndGlyphs">4.50</text>
<text x="736.9" y="512.4" font-size="8.6" fill="#3a3a3a" font-weight="normal" font-style="normal" textLength="12.1" lengthAdjust="spacingAndGlyphs">OB</text>
<text x="798.0" y="512.4" font-size="8.6" fill="#3a3a3a" font-weight="normal" font-style="normal" textLength="15.3" lengthAdjust="spacingAndGlyphs">2SG</text>
</g>
<g id="scrollbar">
<rect x="962" y="150" width="13" height="440" fill="#E3E3E3" />
<line x1="961.7" y1="150" x2="961.7" y2="590" stroke="#d4d4d4" stroke-width="0.8" />
<rect x="962.5" y="150.5" width="12" height="12.5" fill="#FBFBFB" />
<path d="M965.5 158.2l2.8-3 2.8 3z" stroke="none" fill="#555" stroke-width="1" />
<rect x="962.5" y="280" width="11.7" height="28" fill="#FFFFFF" stroke="#cfcfcf" stroke-width="0.6"/>
<rect x="962.5" y="541.5" width="12" height="11.5" fill="#F5F5F5" />
<path d="M965.5 546l2.8 3 2.8-3z" stroke="none" fill="#444" stroke-width="1" />
<path d="M966 561.8l2.3-2.3 2.3 2.3 M966 564.8l2.3-2.3 2.3 2.3" stroke="#444" fill="none" stroke-width="1" />
<path d="M966 571.5l2.3 2.3 2.3-2.3 M966 574.5l2.3 2.3 2.3-2.3" stroke="#444" fill="none" stroke-width="1" />
</g>
<g id="bottom-gradient">
<rect x="-10" y="370" width="985" height="207" fill="url(#btm)" />
<rect x="-10" y="577" width="985" height="20" fill="#000" opacity="0.22"/>
</g>
<g id="webcam">

<g clip-path="url(#camclip)">
<g transform="translate(976,250) scale(0.2358)">
<defs>
<linearGradient id="wall" gradientUnits="userSpaceOnUse" x1="0" y1="0" x2="960" y2="0">
<stop offset="0" stop-color="#a2aeae"/><stop offset="0.06" stop-color="#adb8b7"/><stop offset="0.12" stop-color="#c6cbc7"/><stop offset="0.25" stop-color="#cfd2cc"/><stop offset="0.4" stop-color="#c2c5bf"/><stop offset="0.62" stop-color="#6a6f6e"/><stop offset="0.8" stop-color="#3c4344"/><stop offset="1" stop-color="#2f3738"/>
</linearGradient>
<linearGradient id="rdark" x1="0" y1="0" x2="0" y2="1">
<stop offset="0" stop-color="#1c2224" stop-opacity="0"/><stop offset="0.2" stop-color="#1c2224" stop-opacity="0.25"/><stop offset="0.33" stop-color="#1a2022" stop-opacity="0.95"/><stop offset="1" stop-color="#14191b" stop-opacity="1"/>
</linearGradient>
<linearGradient id="hairg" x1="0" y1="0" x2="1" y2="0.25">
<stop offset="0" stop-color="#B07E52"/><stop offset="0.35" stop-color="#BC8A60"/><stop offset="0.7" stop-color="#9E6A44"/><stop offset="1" stop-color="#684028"/>
</linearGradient>
<linearGradient id="bang" x1="0" y1="0" x2="1" y2="0.5">
<stop offset="0" stop-color="#B8875C"/><stop offset="0.4" stop-color="#CA9C76"/><stop offset="0.8" stop-color="#A06A44"/><stop offset="1" stop-color="#6a4024"/>
</linearGradient>
<linearGradient id="skin" x1="0" y1="0" x2="1" y2="1">
<stop offset="0" stop-color="#BFA0A6"/><stop offset="0.5" stop-color="#D6B9BD"/><stop offset="1" stop-color="#CDAAAE"/>
</linearGradient>
<linearGradient id="blue" x1="0" y1="0" x2="1" y2="0">
<stop offset="0" stop-color="#1f55d8"/><stop offset="0.5" stop-color="#3a84ff"/><stop offset="1" stop-color="#1a49c0"/>
</linearGradient>
</defs>
<rect x="0" y="0" width="1030" height="580" fill="url(#wall)"/>
<rect x="560" y="0" width="470" height="580" fill="url(#rdark)"/>
<g filter="url(#b8)">
<ellipse cx="230" cy="260" rx="170" ry="260" fill="#d6d9d3" opacity="0.45"/>
<ellipse cx="20" cy="510" rx="40" ry="62" fill="#0a0c0c"/>
<rect x="0" y="0" width="90" height="50" fill="#7d8888" opacity="0.6"/>
<ellipse cx="900" cy="340" rx="60" ry="70" fill="#3b4648" opacity="0.7"/>
<rect x="600" y="0" width="430" height="60" fill="#7a7f7e" opacity="0.55"/>
</g>
<g filter="url(#b4)">
<!-- hair back -->
<path d="M395 30 C360 100 335 200 345 330 C360 420 340 500 345 545 L430 580 L720 580 C760 500 790 440 745 380 C700 330 690 200 660 90 C650 50 640 35 625 22 C560 5 450 5 395 30 Z" fill="url(#hairg)"/>
<!-- clothing -->
<path d="M175 580 L215 470 L275 415 L375 392 L420 430 L370 580 Z" fill="#0b0b0f"/>
<path d="M690 580 L735 440 L800 400 L905 430 L960 470 L1030 500 L1030 580 Z" fill="#0b0b0f"/>
<!-- neck -->
<path d="M455 400 L610 380 L620 580 L450 580 Z" fill="#D3B2C2"/>
<!-- face -->
<path d="M380 135 C365 230 378 330 418 395 C455 452 540 458 582 412 C627 360 640 270 615 180 C560 140 470 120 380 135 Z" fill="url(#skin)"/>
<path d="M382 160 C376 240 388 330 425 398 L445 380 C415 320 406 240 412 165 Z" fill="#a98a90" opacity="0.5"/>
<!-- choker -->
<path d="M455 440 C500 470 570 455 612 415 L618 450 C570 490 500 495 460 475 Z" fill="#0d0d14"/>
<!-- bangs -->
<path d="M400 28 C375 80 366 120 372 150 C420 138 475 142 525 160 C565 178 598 210 612 260 C650 190 650 90 620 25 C540 0 440 5 400 28 Z" fill="url(#bang)"/>
<!-- shadow hair right of face -->
<path d="M612 250 C625 300 620 360 600 400 L640 390 C650 330 645 270 640 200 Z" fill="#5d361f"/>
<!-- hair strands lower -->
<path d="M400 380 C390 440 350 480 345 545 L440 580 L470 580 C440 520 450 470 440 420 Z" fill="#A87248"/>
<path d="M610 400 C630 470 640 520 620 580 L720 580 C760 500 785 440 745 380 C700 360 650 370 610 400 Z" fill="#96643E"/>
<!-- headband -->
<path d="M585 15 C650 40 700 90 718 170 L700 175 C680 110 640 60 580 30 Z" fill="#18181c"/>
<!-- left cup -->
<ellipse cx="364" cy="258" rx="28" ry="92" fill="#131a30"/>
<ellipse cx="377" cy="264" rx="13" ry="80" fill="#2565ea"/>
<!-- right cup -->
<ellipse cx="698" cy="250" rx="44" ry="112" fill="#0e1016"/>
<ellipse cx="660" cy="252" rx="25" ry="92" fill="url(#blue)"/>
<path d="M700 150 L710 150 L714 330 L702 330 Z" fill="#1a2a50"/>
<!-- cable -->
<path d="M682 350 C690 420 684 500 692 580 L704 580 C698 500 702 420 696 350 Z" fill="#2a5fd6"/>
</g>
<g filter="url(#b2)">
<ellipse cx="410" cy="224" rx="25" ry="15" fill="#2f3c48" opacity="0.92"/>
<ellipse cx="530" cy="215" rx="31" ry="16" fill="#2f3c48" opacity="0.92"/>
<path d="M382 198 C400 188 425 190 440 200" stroke="#8a6a62" stroke-width="7" fill="none" opacity="0.7"/>
<path d="M500 190 C530 180 560 186 580 200" stroke="#8a6a62" stroke-width="7" fill="none" opacity="0.7"/>
<ellipse cx="458" cy="298" rx="22" ry="14" fill="#bd8d96" opacity="0.8"/>
<ellipse cx="470" cy="356" rx="38" ry="15" fill="#54363f"/>
<ellipse cx="472" cy="353" rx="20" ry="6" fill="#6a9aa6" opacity="0.8"/>
</g>
<g filter="url(#b8)"><ellipse cx="525" cy="310" rx="55" ry="60" fill="#e6cfd2" opacity="0.5"/></g>
</g>
</g>

</g>
</svg>
</div>
</body></html>
